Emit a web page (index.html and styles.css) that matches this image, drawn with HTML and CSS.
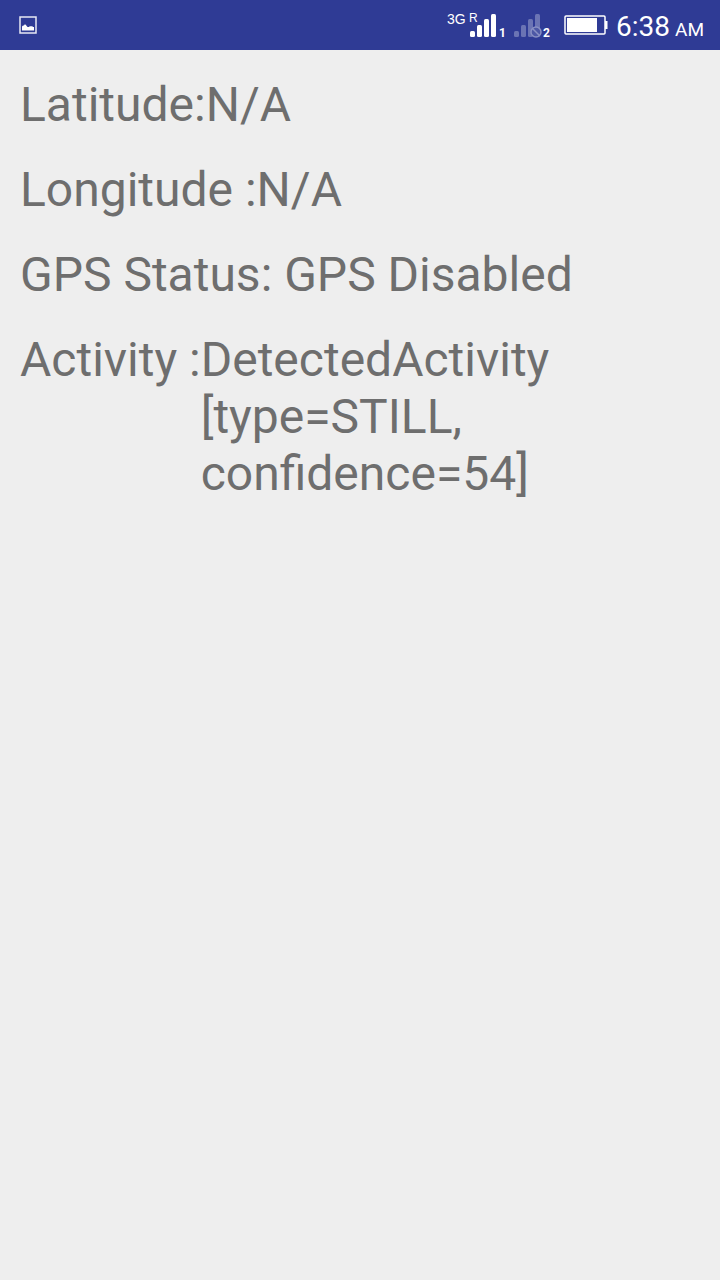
FILE: index.html
```html
<!DOCTYPE html>
<html lang="en">
  <head>
    <meta charset="UTF-8" />
    <meta name="viewport" content="width=device-width, initial-scale=1.0" />
    <title>Activity Tracker</title>
    <link rel="stylesheet" href="styles.css">
  </head>
  <body>
    <header class="status-bar">
      <svg class="icon-image" width="18" height="20" viewBox="0 0 18 20" aria-hidden="true">
        <rect x="1" y="2" width="16" height="16" fill="none" stroke="#e8e9f4" stroke-width="1.5" />
        <path d="M3 15.5v-4l1-1h1l.5-1h1l2 2.5h1.5l1-1 1 .5 1-.5 1 1h1v3.5z" fill="#fff" />
      </svg>

      <div class="status-icons">
        <svg width="59" height="30" viewBox="0 0 59 30" role="img" aria-label="SIM 1 signal">
          <text class="network" x="0" y="14">3G</text>
          <text class="roaming" x="22" y="12">R</text>
          <g fill="#fff">
            <rect x="23" y="21" width="5" height="6" rx="1.5" />
            <rect x="30" y="15" width="5" height="12" rx="1.5" />
            <rect x="37" y="9" width="5" height="18" rx="1.5" />
            <rect x="44" y="4" width="5" height="23" rx="1.5" />
          </g>
          <text class="sim" x="52" y="27">1</text>
        </svg>
        <svg width="37" height="30" viewBox="0 0 37 30" role="img" aria-label="SIM 2 no signal">
          <g fill="#6b74b4">
            <rect x="0" y="21" width="5" height="6" rx="1.5" />
            <rect x="7" y="15" width="5" height="12" rx="1.5" />
            <rect x="14" y="9" width="5" height="18" rx="1.5" />
            <rect x="21" y="4" width="5" height="23" rx="1.5" />
          </g>
          <circle cx="22" cy="22" r="5" fill="#4d58a5" stroke="#8990c4" stroke-width="1.5" />
          <path d="M18.5 18.5l7 7" stroke="#8990c4" stroke-width="1.5" />
          <text class="sim" x="29" y="27">2</text>
        </svg>
        <svg class="battery" width="44" height="30" viewBox="0 0 44 30" role="img" aria-label="Battery">
          <rect x="1" y="6" width="40" height="18" rx="1" fill="none" stroke="#fff" stroke-width="1.5" />
          <rect x="3" y="8" width="30" height="14" fill="#fff" />
          <rect x="41" y="11" width="2.5" height="8" fill="#fff" />
        </svg>
        <div class="clock">
          <span>6:38</span>
          <span class="am-pm">AM</span>
        </div>
      </div>
    </header>

    <main class="info">
      <dl class="row">
        <dt>Latitude:</dt>
        <dd>N/A</dd>
      </dl>
      <dl class="row">
        <dt>Longitude :</dt>
        <dd>N/A</dd>
      </dl>
      <dl class="row">
        <dt>GPS Status: </dt>
        <dd>GPS Disabled</dd>
      </dl>
      <dl class="row">
        <dt>Activity :</dt>
        <dd>DetectedActivity [type=STILL, confidence=54]</dd>
      </dl>
    </main>
  </body>
</html>
```
FILE: styles.css
```css
body {
  margin: 0;
  font-family: Roboto, sans-serif;
  background-color: #eee;
  color: #6e6e6e;
}
.status-bar {
  display: flex;
  align-items: center;
  justify-content: space-between;
  height: 50px;
  padding: 0 16px 0 19px;
  background-color: #2f3b95;
  color: #fff;
}
.status-bar svg {
  display: block;
}
.status-icons {
  display: flex;
  align-items: center;
  gap: 8px;
}
.status-icons text {
  fill: #fff;
}
.network {
  font-family: "Liberation Sans", Arial, sans-serif;
  font-size: 14px;
}
.roaming {
  font-family: "Liberation Sans", Arial, sans-serif;
  font-size: 12px;
}
.sim {
  font-size: 12px;
  font-weight: bold;
}
.battery {
  margin-left: 5px;
}
.clock {
  display: flex;
  align-items: baseline;
  gap: 5px;
  padding-top: 6px;
  font-size: 28px;
  line-height: 32px;
}
.am-pm {
  font-size: 19px;
}
.info {
  display: flex;
  flex-direction: column;
  gap: 28px;
  padding: 26px 20px;
  font-size: 48px;
  line-height: 57px;
}
.row {
  display: flex;
  margin: 0;
}
.row dt {
  flex: none;
  white-space: pre;
}
.row dd {
  flex: 1;
  min-width: 0;
  max-width: 400px;
  margin: 0;
}
```
